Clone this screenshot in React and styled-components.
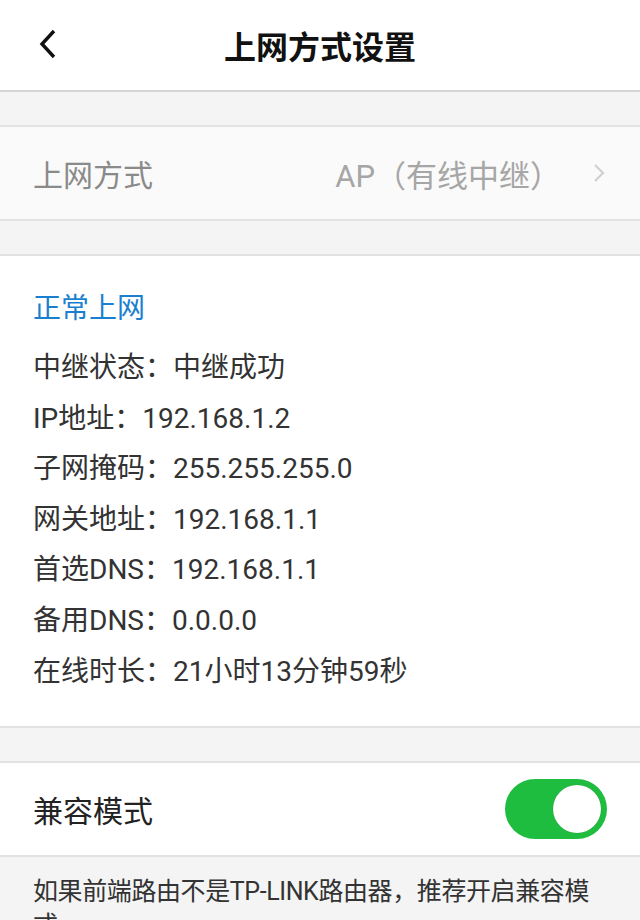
import React, { useState } from "react";
import styled, { createGlobalStyle } from "styled-components";

const GlobalStyle = createGlobalStyle`
  html, body {
    margin: 0;
    padding: 0;
    background: #f4f4f4;
    font-family: Roboto, "Noto Sans CJK SC", sans-serif;
  }
`;

const Page = styled.div`
  width: 640px;
  min-height: 920px;
  background: #f4f4f4;
  overflow: hidden;
`;

const Header = styled.header`
  position: relative;
  height: 90px;
  display: flex;
  align-items: center;
  justify-content: center;
  background: #ffffff;
  border-bottom: 2px solid #d4d4d4;
`;

const BackButton = styled.button`
  position: absolute;
  left: 28px;
  top: 24px;
  width: 40px;
  height: 40px;
  padding: 0;
  border: 0;
  background: none;
  display: flex;
  align-items: center;
  justify-content: center;
`;

const Title = styled.h1`
  margin: 0;
  font-family: "Noto Sans CJK SC", sans-serif;
  font-size: 32px;
  font-weight: 700;
  color: #111;
`;

const Gap = styled.div`
  height: 33px;
  border-bottom: 2px solid #e2e2e2;
`;

const Section = styled.section`
  background: ${({ muted }) => (muted ? "#fafafa" : "#ffffff")};
  border-bottom: 2px solid #e2e2e2;
`;

const Row = styled.div`
  height: 92px;
  padding: 0 33px;
  display: flex;
  align-items: center;
  justify-content: space-between;
`;

const RowLabel = styled.span`
  font-family: "Noto Sans CJK SC", sans-serif;
  font-size: 30px;
  color: ${({ dim }) => (dim ? "#8a8a8a" : "#222")};
`;

const RowValue = styled.span`
  display: flex;
  align-items: center;
  gap: 32px;
  font-family: Roboto, "Noto Sans CJK SC", sans-serif;
  font-size: 31px;
  color: #a6a6a6;
  margin-right: 2px;
`;

const Info = styled.div`
  padding: 30px 33px 29px;
`;

const Status = styled.div`
  font-family: "Noto Sans CJK SC", sans-serif;
  font-size: 28px;
  color: #1a7fcf;
  line-height: 40px;
  margin-bottom: 17px;
`;

const Line = styled.div`
  font-family: Roboto, "Noto Sans CJK SC", sans-serif;
  font-size: 28px;
  color: #333;
  line-height: 50.6px;
`;

const Toggle = styled.button`
  width: 102px;
  height: 60px;
  padding: 0;
  border: 0;
  border-radius: 30px;
  background: ${({ on }) => (on ? "#1fbd3f" : "#e0e0e0")};
  display: flex;
  align-items: center;
  justify-content: ${({ on }) => (on ? "flex-end" : "flex-start")};
`;

const Knob = styled.span`
  width: 48px;
  height: 48px;
  margin: 0 6px;
  border-radius: 50%;
  background: #fff;
  box-shadow: 0 0 1px rgba(0, 0, 0, 0.3);
`;

const Note = styled.p`
  margin: 0;
  padding: 18px 30px 0 33px;
  font-family: Roboto, "Noto Sans CJK SC", sans-serif;
  font-size: 25px;
  letter-spacing: -0.4px;
  line-height: 34px;
  color: #333;
`;

const info = [
  ["中继状态：", "中继成功"],
  ["IP地址：", "192.168.1.2"],
  ["子网掩码：", "255.255.255.0"],
  ["网关地址：", "192.168.1.1"],
  ["首选DNS：", "192.168.1.1"],
  ["备用DNS：", "0.0.0.0"],
  ["在线时长：", "21小时13分钟59秒"],
];

export default function App() {
  const [compat, setCompat] = useState(true);

  return (
    <Page>
      <GlobalStyle />
      <Header>
        <BackButton aria-label="返回">
          <svg width="20" height="30" viewBox="0 0 20 30">
            <path d="M16 2 L4 15 L16 28" fill="none" stroke="#111" strokeWidth="3.4" />
          </svg>
        </BackButton>
        <Title>上网方式设置</Title>
      </Header>

      <Gap />
      <Section muted>
        <Row>
          <RowLabel dim>上网方式</RowLabel>
          <RowValue>
            AP（有线中继）
            <svg width="12" height="20" viewBox="0 0 12 20">
              <path d="M2 2 L10 10 L2 18" fill="none" stroke="#d0d0d0" strokeWidth="2.2" />
            </svg>
          </RowValue>
        </Row>
      </Section>

      <Gap />
      <Section>
        <Info>
          <Status>正常上网</Status>
          {info.map(([k, v]) => (
            <Line key={k}>
              {k}
              {v}
            </Line>
          ))}
        </Info>
      </Section>

      <Gap />
      <Section>
        <Row>
          <RowLabel>兼容模式</RowLabel>
          <Toggle on={compat} onClick={() => setCompat(!compat)}>
            <Knob />
          </Toggle>
        </Row>
      </Section>

      <Note>如果前端路由不是TP-LINK路由器，推荐开启兼容模式</Note>
    </Page>
  );
}
